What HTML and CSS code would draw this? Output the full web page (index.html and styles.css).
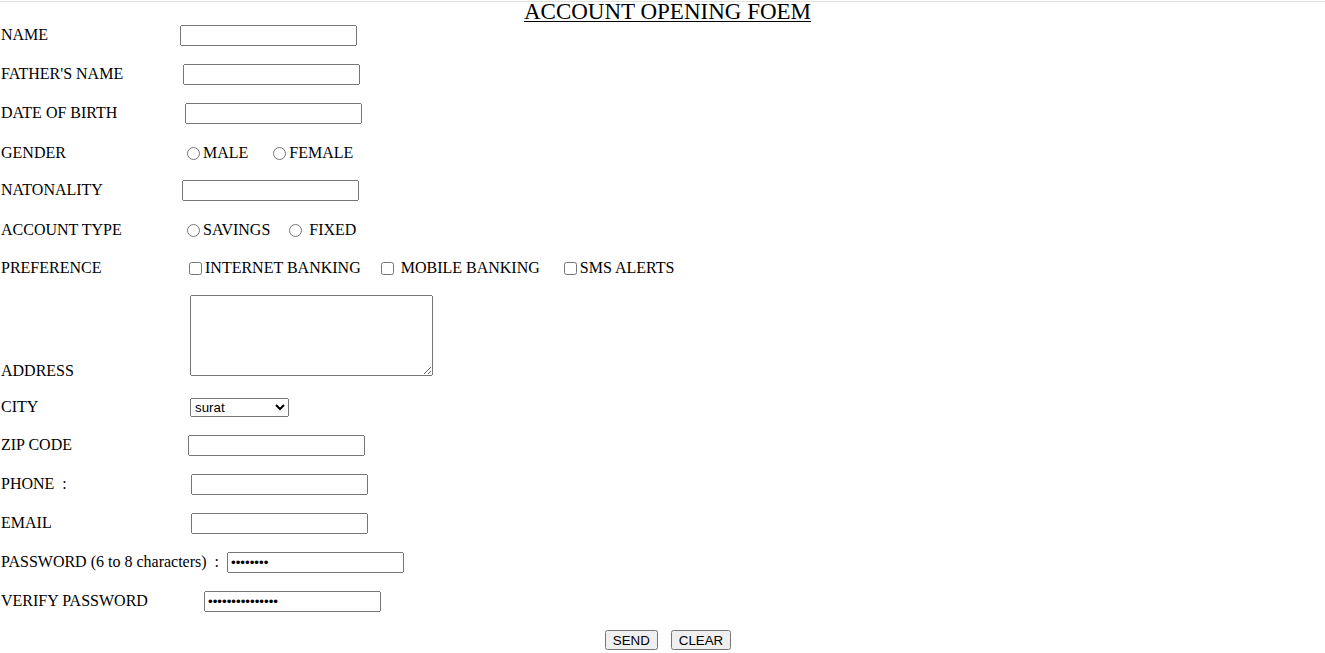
FILE: index.html
```html
<!DOCTYPE html>
<html>
<head>
<meta charset="utf-8">
<title>Account Opening Form</title>
<link rel="stylesheet" href="styles.css">
</head>
<body>
<div class="page">
  <h1 class="title">ACCOUNT OPENING FOEM</h1>
  <form class="form">
    <div class="row">
      <label class="lbl lbl-name">NAME</label>
      <input class="field" type="text">
    </div>
    <div class="row">
      <label class="lbl lbl-father">FATHER'S NAME</label>
      <input class="field" type="text">
    </div>
    <div class="row">
      <label class="lbl lbl-dob">DATE OF BIRTH</label>
      <input class="field" type="text">
    </div>
    <div class="row row-choice">
      <span class="lbl lbl-gender">GENDER</span>
      <label class="opt"><input type="radio" name="gender">MALE</label>
      <label class="opt opt-female"><input type="radio" name="gender">FEMALE</label>
    </div>
    <div class="row">
      <label class="lbl lbl-nat">NATONALITY</label>
      <input class="field" type="text">
    </div>
    <div class="row row-choice">
      <span class="lbl lbl-acc">ACCOUNT TYPE</span>
      <label class="opt"><input type="radio" name="acc">SAVINGS</label>
      <label class="opt opt-fixed"><input type="radio" name="acc"> FIXED</label>
    </div>
    <div class="row row-choice">
      <span class="lbl lbl-pref">PREFERENCE</span>
      <label class="opt"><input type="checkbox">INTERNET BANKING</label>
      <label class="opt opt-mobile"><input type="checkbox"> MOBILE BANKING</label>
      <label class="opt opt-sms"><input type="checkbox">SMS ALERTS</label>
    </div>
    <div class="row row-address">
      <label class="lbl lbl-address">ADDRESS</label>
      <textarea class="address"></textarea>
    </div>
    <div class="row row-city">
      <label class="lbl lbl-city">CITY</label>
      <select class="city">
        <option>surat</option>
        <option>ahmedabad</option>
        <option>vadodara</option>
        <option>rajkot</option>
      </select>
    </div>
    <div class="row">
      <label class="lbl lbl-zip">ZIP CODE</label>
      <input class="field" type="text">
    </div>
    <div class="row">
      <label class="lbl lbl-phone">PHONE&nbsp; :</label>
      <input class="field" type="text">
    </div>
    <div class="row">
      <label class="lbl lbl-email">EMAIL</label>
      <input class="field" type="text">
    </div>
    <div class="row">
      <label class="lbl lbl-pwd">PASSWORD (6 to 8 characters)&nbsp; :</label>
      <input class="field" type="password" value="12345678">
    </div>
    <div class="row">
      <label class="lbl lbl-verify">VERIFY PASSWORD</label>
      <input class="field" type="password" value="123456789012345">
    </div>
    <div class="row row-buttons">
      <button type="submit" class="btn">SEND</button>
      <button type="reset" class="btn">CLEAR</button>
    </div>
  </form>
</div>
</body>
</html>
```
FILE: styles.css
```css
html, body {
  margin: 0;
  padding: 0;
  background: #fff;
}

body {
  font-family: "Liberation Serif", "Times New Roman", serif;
  font-size: 16px;
  color: #000;
}

.page {
  margin-top: 1px;
  border-top: 1px solid #e0e0e0;
}

.title {
  margin: -2px 0 1px 0;
  padding-left: 10px;
  height: 24px;
  line-height: 23px;
  font-size: 23px;
  font-weight: normal;
  text-align: center;
  text-decoration: underline;
  text-underline-offset: 2px;
  text-decoration-thickness: 1px;
}

.form {
  margin: 0;
}

.row {
  display: flex;
  align-items: center;
  height: 21px;
  margin-bottom: 18px;
}

.row-choice {
  height: 20px;
}

.lbl {
  flex: 0 0 auto;
  white-space: nowrap;
  padding-left: 1px;
  box-sizing: border-box;
  margin-bottom: 2px;
}

.row-choice .lbl,
.row-choice .opt {
  margin-top: 2px;
  margin-bottom: 0;
}

.lbl-name { width: 180px; }
.lbl-father { width: 183px; }
.lbl-dob { width: 185px; }
.lbl-gender { width: 182px; }
.lbl-nat { width: 182px; }
.lbl-acc { width: 182px; }
.lbl-pref { width: 185px; }
.row-address .lbl-address { width: 190px; margin-bottom: -4px; }
.lbl-city { width: 190px; }
.lbl-zip { width: 188px; }
.lbl-phone { width: 191px; }
.lbl-email { width: 191px; }
.lbl-pwd { width: 227px; }
.lbl-verify { width: 204px; }

.field {
  box-sizing: border-box;
  width: 177px;
  height: 21px;
  margin: 0;
  font-family: "Liberation Sans", Arial, sans-serif;
  font-size: 13.333px;
}

.opt {
  display: flex;
  align-items: center;
  white-space: pre;
}

.opt input {
  margin-top: 0;
  margin-bottom: 0;
}

.opt input[type="radio"] {
  margin-left: 5px;
  margin-right: 3px;
}

.opt input[type="checkbox"] {
  margin-left: 4px;
  margin-right: 3px;
}

.opt-female { margin-left: 20px; }
.opt-fixed { margin-left: 14px; }
.opt-mobile { margin-left: 16px; }
.opt-sms { margin-left: 20px; }

.row-address {
  height: 81px;
  align-items: flex-end;
  margin-bottom: 22px;
}

.address {
  box-sizing: border-box;
  width: 243px;
  height: 81px;
  margin: 0;
}

.row-city {
  height: 19px;
}

.city {
  box-sizing: border-box;
  width: 99px;
  height: 19px;
  margin: 0;
  font-family: "Liberation Sans", Arial, sans-serif;
  font-size: 13.333px;
}

.row-buttons {
  justify-content: center;
  gap: 13px;
  padding-left: 11px;
  height: 20px;
  margin-bottom: 0;
}

.btn {
  font-family: "Liberation Sans", Arial, sans-serif;
  font-size: 13.333px;
  margin: 0;
  height: 20px;
  padding: 1px 6px;
}
```
